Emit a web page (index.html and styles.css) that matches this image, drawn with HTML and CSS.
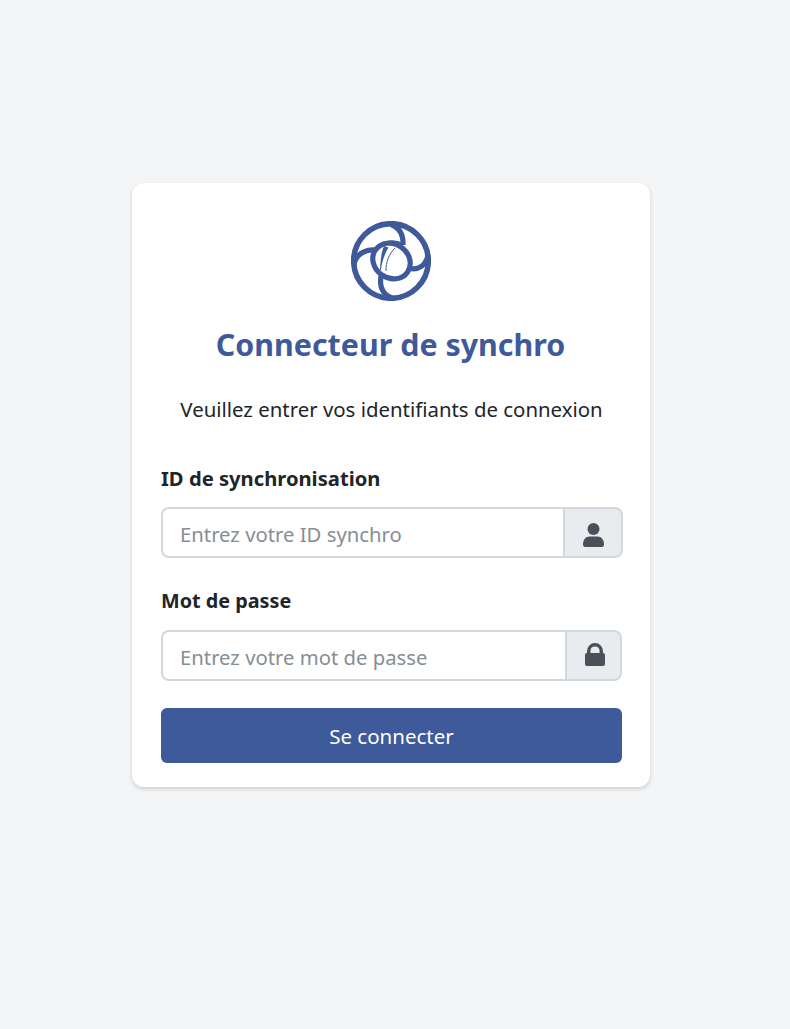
FILE: index.html
```html
<!DOCTYPE html>
<html lang="fr">
<head>
<meta charset="utf-8">
<title>Connecteur de synchro</title>
<link rel="stylesheet" href="styles.css">
</head>
<body>
<main class="card">
  <svg class="logo" viewBox="0 0 80 80" width="80" height="80" aria-hidden="true">
    <g fill="none" stroke="#3f5a9a" stroke-width="5.200">
      <circle cx="40" cy="40" r="37.300" stroke-width="5.600"/>
      <ellipse cx="40.500" cy="40" rx="19.500" ry="17" transform="rotate(35 40.500 40)"/>
      <path d="M40 3.500C48 6.500 52.500 13 52 24"/>
      <path d="M77 34C75 44 68 50 57 47"/>
      <path d="M41 77C32 73.500 28 67 30 55"/>
      <path d="M3 43C5 34 13 28 25 29"/>
      <path d="M25 29C32 21 42 19 52 24" stroke-width="4"/>
    </g>
    <path d="M33 25L37.500 26.500C33.500 33 31 41 29.800 49L29 49C29.500 41 30 32 33 25Z" fill="#3f5a9a"/>
    <path d="M35 50C34.800 41 38 33 44 27" fill="none" stroke="#3f5a9a" stroke-width="1"/>
  </svg>
  <h1 class="title">Connecteur de synchro</h1>
  <p class="intro">Veuillez entrer vos identifiants de connexion</p>
  <form class="form">
    <div class="field field-id">
      <label class="label" for="sync-id">ID de synchronisation</label>
      <div class="group">
        <input class="input" id="sync-id" type="text" placeholder="Entrez votre ID synchro">
        <span class="addon">
          <svg viewBox="0 0 21 24" width="21" height="24" aria-hidden="true"><circle cx="10.500" cy="6" r="6" fill="#495057"/><path fill="#495057" d="M6.500 13.500h8C18.500 13.500 21 17 21 21.500 21 23 20 24 19 24H2C1 24 0 23 0 21.500 0 17 2.500 13.500 6.500 13.500Z"/></svg>
        </span>
      </div>
    </div>
    <div class="field field-pass">
      <label class="label" for="sync-pass">Mot de passe</label>
      <div class="group group-pass">
        <input class="input" id="sync-pass" type="password" placeholder="Entrez votre mot de passe">
        <span class="addon addon-pass">
          <svg viewBox="0 0 20 23" width="20" height="23" aria-hidden="true"><path fill="none" stroke="#495057" stroke-width="3.400" d="M3.700 11V8.300C3.700 4.500 6.400 1.700 10 1.700S16.300 4.500 16.300 8.300V11"/><rect x="0" y="10" width="20" height="13" rx="2" fill="#495057"/></svg>
        </span>
      </div>
    </div>
    <button class="submit" type="button">Se connecter</button>
  </form>
</main>
</body>
</html>
```

FILE: styles.css
```css
* { box-sizing: border-box; }
html, body { height: 100%; }
body {
  margin: 0;
  padding: 0 8px 59px 0;
  background: #f4f5f7;
  display: flex;
  align-items: center;
  justify-content: center;
  font-family: "Noto Sans", sans-serif;
  color: #212529;
}
.card {
  width: 518px;
  height: 604px;
  padding: 38px 28px 24px 29px;
  background: #fff;
  border-radius: 12px;
  box-shadow: 0 2px 4px rgba(0, 0, 0, .16);
  display: flex;
  flex-direction: column;
}
.logo { display: block; align-self: center; flex: none; margin-right: 2px; }
.title {
  margin: 23px 2px 0 0;
  font-size: 30.4px;
  line-height: 42px;
  font-weight: 700;
  color: #3f5a9a;
  text-align: center;
}
.intro {
  margin: 27px 0 0;
  font-size: 20.4px;
  line-height: 32px;
  text-align: center;
  color: #212529;
}
.form { display: flex; flex-direction: column; margin-top: 39px; }
.label {
  display: block;
  font-size: 20.2px;
  line-height: 28px;
  font-weight: 700;
  margin-bottom: 15px;
}
.field-pass { margin-top: 29px; }
.field-pass .label { font-size: 19.8px; }
.group { display: flex; height: 51px; margin-right: -1px; }
.group-pass { margin-right: 0; }
.input {
  flex: 1;
  min-width: 0;
  padding: 3px 17px 0;
  font: 20.3px "Noto Sans", sans-serif;
  border: 2px solid #d3d8de;
  border-right: 0;
  border-radius: 8px 0 0 8px;
  background: #fff;
  outline: none;
}
.input::placeholder { color: #868e96; opacity: 1; }
.addon {
  width: 60px;
  padding-top: 4px;
  display: flex;
  align-items: center;
  justify-content: center;
  background: #e9ecef;
  border: 2px solid #d3d8de;
  border-radius: 0 8px 8px 0;
}
.addon-pass { width: 57px; padding: 0 0 2px 2px; }
.submit {
  margin-top: 27px;
  height: 55px;
  border: 0;
  border-radius: 6px;
  background: #3f5a9a;
  color: #fff;
  font: 20.5px "Noto Sans", sans-serif;
}
```
